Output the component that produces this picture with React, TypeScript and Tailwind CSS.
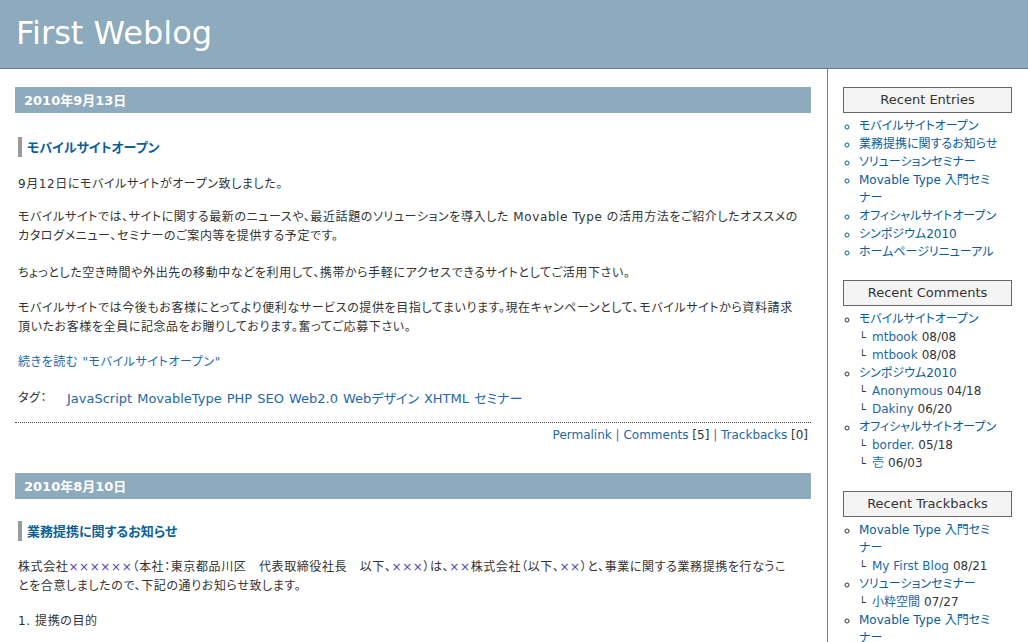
import React from "react";

const FONT = "[font-family:'DejaVu_Sans','Noto_Sans_CJK_JP',sans-serif]";

const recentEntries = [
  "モバイルサイトオープン",
  "業務提携に関するお知らせ",
  "ソリューションセミナー",
  "Movable Type 入門セミナー",
  "オフィシャルサイトオープン",
  "シンポジウム2010",
  "ホームページリニューアル",
];

const recentComments = [
  { title: "モバイルサイトオープン", subs: [["mtbook", "08/08"], ["mtbook", "08/08"]] },
  { title: "シンポジウム2010", subs: [["Anonymous", "04/18"], ["Dakiny", "06/20"]] },
  { title: "オフィシャルサイトオープン", subs: [["border.", "05/18"], ["壱", "06/03"]] },
];

const recentTrackbacks = [
  { title: "Movable Type 入門セミナー", subs: [["My First Blog", "08/21"]] },
  { title: "ソリューションセミナー", subs: [["小粋空間", "07/27"]] },
  { title: "Movable Type 入門セミナー", subs: [] as string[][] },
];

const tags = ["JavaScript", "MovableType", "PHP", "SEO", "Web2.0", "Webデザイン", "XHTML", "セミナー"];

function DateBar({ label }: { label: string }) {
  return (
    <div className="flex h-[26px] items-center bg-[#8eaabd] px-[9px] text-[13px] font-bold text-white">
      {label}
    </div>
  );
}

function EntryTitle({ children }: { children: React.ReactNode }) {
  return (
    <h2 className="ml-[3px] flex h-[20px] items-center border-l-[4px] border-[#9a9a9a] pl-[5px] text-[13px] font-bold text-[#0b6196]">
      {children}
    </h2>
  );
}

function SideBox({ title, children }: { title: string; children: React.ReactNode }) {
  return (
    <section className="mb-[19px]">
      <div className="flex h-[26px] items-center justify-center border border-[#666] bg-[#f4f4f4] text-[13px] text-[#333]">
        {title}
      </div>
      <ul className="mt-[4px] w-[157px] list-[circle] pl-[16px] text-[12px] leading-[18px] text-[#333]">
        {children}
      </ul>
    </section>
  );
}

function Sub({ name, date }: { name: string; date: string }) {
  return (
    <div className="flex h-[18px] items-baseline overflow-hidden leading-[18px]">
      <span className="w-[13px] text-[11px] leading-[18px] text-[#333]">└</span>
      <span className="text-[#1e67a8]">{name}</span>
      <span className="ml-[4px] text-[#333]">{date}</span>
    </div>
  );
}

const X = ({ n }: { n: number }) => <span className="text-[#4a4ab0]">{"×".repeat(n)}</span>;

export default function App() {
  return (
    <div className={`${FONT} min-h-[642px] bg-white [font-feature-settings:'palt']`}>
      <header className="flex h-[69px] items-center border-b border-[#6f6fa5] bg-[#8eaabd] pl-[16px]">
        <h1 className="pb-[2px] text-[32px] text-white">First Weblog</h1>
      </header>

      <div className="flex">
        <main className="w-[828px] shrink-0 border-r border-[#7a7aa6] pl-[15px] pr-[16px] pt-[18px] text-[12px] leading-[19px] text-[#333]">
          <DateBar label="2010年9月13日" />
          <div className="mt-[24px]">
            <EntryTitle>モバイルサイトオープン</EntryTitle>
          </div>
          <div className="pl-[3px] pr-[6px] pt-[18px] tracking-[0.6px]">
            <p className="mb-[14px]">9月12日にモバイルサイトがオープン致しました。</p>
            <p className="mb-[18px]">
              モバイルサイトでは、サイトに関する最新のニュースや、最近話題のソリューションを導入した Movable Type
              の活用方法をご紹介したオススメのカタログメニュー、セミナーのご案内等を提供する予定です。
            </p>
            <p className="mb-[16px]">
              ちょっとした空き時間や外出先の移動中などを利用して、携帯から手軽にアクセスできるサイトとしてご活用下さい。
            </p>
            <p className="mb-[16px]">
              モバイルサイトでは今後もお客様にとってより便利なサービスの提供を目指してまいります。現在キャンペーンとして、モバイルサイトから資料請求頂いたお客様を全員に記念品をお贈りしております。奮ってご応募下さい。
            </p>
            <p className="mb-[17px] text-[#1e67a8]">続きを読む "モバイルサイトオープン"</p>
            <div className="flex">
              <span className="w-[49px] shrink-0">タグ：</span>
              <div className="flex flex-wrap gap-x-[5px] text-[13px] tracking-normal text-[#1e67a8]">
                {tags.map((t) => (
                  <span key={t}>{t}</span>
                ))}
              </div>
            </div>
          </div>
          <div className="mt-[14px] border-t border-dotted border-[#444]" />
          <div className="mt-[3px] pr-[3px] text-right text-[12px] text-[#1e67a8]">
            Permalink <span className="text-[#6a5a9a]">|</span> Comments <span className="text-[#333]">[5]</span>{" "}
            <span className="text-[#6a5a9a]">|</span> Trackbacks <span className="text-[#333]">[0]</span>
          </div>

          <div className="mt-[28px]">
            <DateBar label="2010年8月10日" />
          </div>
          <div className="mt-[22px]">
            <EntryTitle>業務提携に関するお知らせ</EntryTitle>
          </div>
          <div className="pl-[3px] pr-[16px] pt-[17px] tracking-[0.6px]">
            <p className="mb-[16px]">
              株式会社<X n={6} />（本社：東京都品川区　代表取締役社長　以下、<X n={3} />）は、<X n={2} />
              株式会社（以下、<X n={2} />）と、事業に関する業務提携を行なうことを合意しましたので、下記の通りお知らせ致します。
            </p>
            <p>1. 提携の目的</p>
          </div>
        </main>

        <aside className="flex-1 pl-[15px] pr-[16px] pt-[18px]">
          <SideBox title="Recent Entries">
            {recentEntries.map((e) => (
              <li key={e} className="text-[#0a5c98]">
                {e}
              </li>
            ))}
          </SideBox>
          <SideBox title="Recent Comments">
            {recentComments.map((c) => (
              <li key={c.title}>
                <span className="text-[#0a5c98]">{c.title}</span>
                {c.subs.map(([n, d], i) => (
                  <Sub key={i} name={n} date={d} />
                ))}
              </li>
            ))}
          </SideBox>
          <SideBox title="Recent Trackbacks">
            {recentTrackbacks.map((c, i) => (
              <li key={i}>
                <span className="text-[#0a5c98]">{c.title}</span>
                {c.subs.map(([n, d], j) => (
                  <Sub key={j} name={n} date={d} />
                ))}
              </li>
            ))}
          </SideBox>
        </aside>
      </div>
    </div>
  );
}
